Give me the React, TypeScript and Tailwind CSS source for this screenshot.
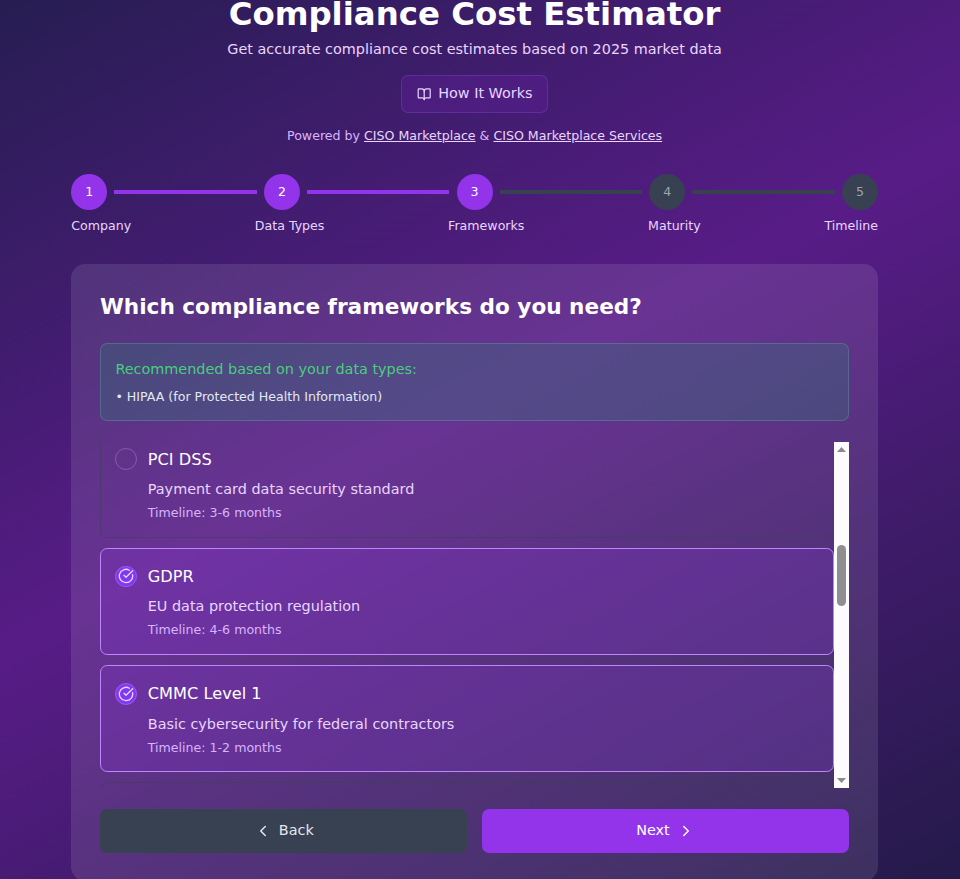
import { useEffect, useRef } from "react";
import { BookOpen, CheckCircle, ChevronLeft, ChevronRight } from "lucide-react";

const steps = ["Company", "Data Types", "Frameworks", "Maturity", "Timeline"];

const frameworks = [
  { name: "SOC 2 Type I", desc: "Security controls at a point in time", time: "3-4 months" },
  { name: "SOC 2 Type II", desc: "Security controls over a period of time", time: "6-12 months" },
  { name: "ISO 27001", desc: "International security management standard", time: "6-12 months" },
  { name: "HIPAA", desc: "Healthcare data protection requirements", time: "4-6 months" },
  { name: "PCI DSS", desc: "Payment card data security standard", time: "3-6 months" },
  { name: "GDPR", desc: "EU data protection regulation", time: "4-6 months", selected: true },
  { name: "CMMC Level 1", desc: "Basic cybersecurity for federal contractors", time: "1-2 months", selected: true },
  { name: "CMMC Level 2", desc: "Advanced cybersecurity for federal contractors", time: "6-12 months" },
  { name: "FedRAMP", desc: "Federal cloud security authorization", time: "12-18 months" },
];

function Stepper() {
  return (
    <div className="mt-[28.8px]">
      <div className="flex items-center">
        {steps.map((step, i) => (
          <div key={step} className={i < 4 ? "flex flex-1 items-center" : "flex items-center"}>
            <div
              className={
                i < 3
                  ? "flex h-9 w-9 items-center justify-center rounded-full bg-[#9333ea] text-[12.6px] text-white"
                  : "flex h-9 w-9 items-center justify-center rounded-full bg-[#374151] text-[12.6px] text-[#9ca3af]"
              }
            >
              {i + 1}
            </div>
            {i < 4 && (
              <div className={i < 2 ? "mx-[7.2px] h-[3.6px] flex-1 bg-[#9333ea]" : "mx-[7.2px] h-[3.6px] flex-1 bg-[#374151]"} />
            )}
          </div>
        ))}
      </div>
      <div className="mt-[6.6px] flex justify-between text-[12.6px] leading-[18px] text-[#e9d5ff]">
        {steps.map((step) => (
          <span key={step}>{step}</span>
        ))}
      </div>
    </div>
  );
}

function FrameworkList() {
  const listRef = useRef<HTMLDivElement>(null);

  useEffect(() => {
    if (listRef.current) listRef.current.scrollTop = 481;
  }, []);

  return (
    <div className="mt-[21px] flex h-[346.2px]">
      <div ref={listRef} className="flex flex-1 flex-col gap-[10px] overflow-hidden">
        {frameworks.map((fw) => (
          <div
            key={fw.name}
            className={
              fw.selected
                ? "flex shrink-0 gap-[10.8px] rounded-[7.2px] border border-[#c084fc] bg-[#9333ea]/20 px-[14.4px] pt-[15.4px] pb-[14.4px]"
                : "flex shrink-0 gap-[10.8px] rounded-[7.2px] border border-[#374151]/50 px-[14.4px] pt-[15.4px] pb-[14.4px]"
            }
          >
            {fw.selected ? (
              <div className="mt-[1.8px] flex h-[21.6px] w-[21.6px] shrink-0 items-center justify-center rounded-full border border-[#a855f7] bg-[#7e3af2]">
                <CheckCircle className="h-4 w-4 text-[#e9d5ff]" />
              </div>
            ) : (
              <div className="mt-[1.8px] h-[21.6px] w-[21.6px] shrink-0 rounded-full border border-[#d8b4fe]/30" />
            )}
            <div>
              <div className="text-[16.2px] leading-[25.2px] text-white">{fw.name}</div>
              <div className="mt-[7.2px] text-[14.4px] leading-[21.6px] text-[#e9d5ff]">{fw.desc}</div>
              <div className="mt-[3.6px] text-[12.6px] leading-[18px] text-[#d8b4fe]">Timeline: {fw.time}</div>
            </div>
          </div>
        ))}
      </div>
      {/* scrollbar as the browser drew it */}
      <div className="flex w-[15px] shrink-0 flex-col items-center bg-[#fdfbfe]">
        <svg width="15" height="15" viewBox="0 0 15 15" className="shrink-0">
          <path d="M3 10 L7.5 5 L12 10 Z" fill="#8a8a8a" />
        </svg>
        <div className="flex-1">
          <div className="mt-[88px] h-[61px] w-[9px] rounded-[5px] bg-[#8f8f8f]" />
        </div>
        <svg width="15" height="15" viewBox="0 0 15 15" className="shrink-0">
          <path d="M3 5 L7.5 10 L12 5 Z" fill="#8a8a8a" />
        </svg>
      </div>
    </div>
  );
}

export default function App() {
  return (
    <div className="h-screen overflow-hidden bg-[linear-gradient(152deg,#261d52_0%,#581c87_47%,#241a4a_100%)] font-['DejaVu_Sans',sans-serif]">
      <div className="-mt-1 ml-[71.2px] w-[806.8px]">
        <div className="text-center">
          <h1 className="text-[32.4px] leading-[36px] font-bold text-white">Compliance Cost Estimator</h1>
          <p className="mt-[7.2px] text-[14.4px] leading-[21.6px] text-[#e9d5ff]">
            Get accurate compliance cost estimates based on 2025 market data
          </p>
          <button className="mt-[14.4px] inline-flex h-[38px] items-center gap-[7.2px] rounded-[7.2px] border border-[#a855f7]/25 bg-[#6b21a8]/30 px-[14.4px] text-[14.4px] text-[#e9d5ff]">
            <BookOpen className="h-[14.4px] w-[14.4px]" />
            How It Works
          </button>
          <p className="mt-[14px] text-[12.6px] leading-[18px] text-[#d8b4fe]">
            Powered by <a className="text-[#e9d5ff] underline">CISO Marketplace</a> &amp;{" "}
            <a className="text-[#e9d5ff] underline">CISO Marketplace Services</a>
          </p>
        </div>

        <Stepper />

        <div className="mt-[29.4px] rounded-[14.4px] bg-white/10 p-[28.8px]">
          <h2 className="text-[21.6px] leading-[28.8px] font-bold text-white">Which compliance frameworks do you need?</h2>
          <div className="mt-[21.6px] rounded-[7.2px] border border-[#5f9e9f]/40 bg-[#1f8a70]/25 px-[14.4px] pt-[14.4px] pb-[13.4px]">
            <p className="text-[14.4px] leading-[21.6px] text-[#4ade80]/90">Recommended based on your data types:</p>
            <p className="mt-[8.2px] text-[12.6px] leading-[18px] text-[#e2e8f0]">• HIPAA (for Protected Health Information)</p>
          </div>
          <FrameworkList />
          <div className="mt-[21.6px] flex gap-[14.4px]">
            <button className="flex h-[43.2px] flex-1 items-center justify-center gap-[7.2px] rounded-[7.2px] bg-[#374151] text-[14.4px] text-[#e5e7eb]">
              <ChevronLeft className="h-[18px] w-[18px]" />
              Back
            </button>
            <button className="flex h-[43.2px] flex-1 items-center justify-center gap-[7.2px] rounded-[7.2px] bg-[#9333ea] text-[14.4px] text-white">
              Next
              <ChevronRight className="h-[18px] w-[18px]" />
            </button>
          </div>
        </div>
      </div>
    </div>
  );
}
